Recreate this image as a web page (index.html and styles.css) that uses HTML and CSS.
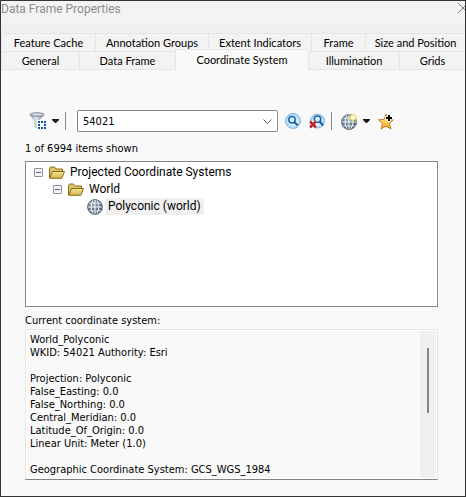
FILE: index.html
```html
<!DOCTYPE html>
<html lang="en">
<head>
<meta charset="utf-8">
<title>Data Frame Properties</title>
<link rel="stylesheet" href="styles.css">
</head>
<body>
<svg class="defs" aria-hidden="true">
  <defs>
    <linearGradient id="metal"><stop offset="0" stop-color="#8292a3"/><stop offset=".4" stop-color="#e4e9ee"/><stop offset="1" stop-color="#748496"/></linearGradient>
    <radialGradient id="glass"><stop offset="0" stop-color="#ffffff"/><stop offset=".65" stop-color="#cdeafb"/><stop offset="1" stop-color="#9fcdec"/></radialGradient>
    <radialGradient id="ball" cx=".4" cy=".35"><stop offset="0" stop-color="#9aa8b8"/><stop offset="1" stop-color="#56677c"/></radialGradient>
    <linearGradient id="gold" x2="0" y2="1"><stop offset="0" stop-color="#fff6a0"/><stop offset="1" stop-color="#f5a81c"/></linearGradient>
    <linearGradient id="folderfill" x2="0" y2="1"><stop offset="0" stop-color="#f4e393"/><stop offset="1" stop-color="#d3b64f"/></linearGradient>
    <symbol id="globe" viewBox="0 0 16 16">
      <circle cx="8" cy="8" r="7.5" fill="url(#ball)" stroke="#6f7c8b"/>
      <path d="M8 1v14M1 8h14M2.500 4.500q5.500-1.500 11 0M2.500 11.500q5.500 1.500 11 0M6 1.500q-4 6.500 0 13M10 1.500q4 6.500 0 13" fill="none" stroke="#f2f5f8"/>
    </symbol>
    <symbol id="folder" viewBox="0 0 16 13">
      <path d="M.5 12V2.500l1-1.500h4l1.500 2h6.500v2.500" fill="#dcc36a" stroke="#8a6d1c"/>
      <path d="M.8 12.300 3.500 5.500h12l-2.700 6.800z" fill="url(#folderfill)" stroke="#8a6d1c"/>
    </symbol>
    <symbol id="caret" viewBox="0 0 7 4"><path d="M0 0h7v1L4 4H3L0 1z" fill="#1c1c1c"/></symbol>
  </defs>
</svg>
<main class="window">
  <header class="titlebar">
    <h1>Data Frame Properties</h1>
    <button class="close" aria-label="Close"><svg width="10" height="10" viewBox="0 0 10 10"><path d="M0 0l10 10M10 0L0 10" stroke="#858585" fill="none"/></svg></button>
  </header>
  <nav class="tabs" role="tablist">
    <div class="tabrow tabrow-back">
      <button role="tab">Feature Cache</button>
      <button role="tab">Annotation Groups</button>
      <button role="tab">Extent Indicators</button>
      <button role="tab">Frame</button>
      <button role="tab">Size and Position</button>
    </div>
    <div class="tabrow tabrow-front">
      <button role="tab">General</button>
      <button role="tab">Data Frame</button>
      <button role="tab" class="selected" aria-selected="true">Coordinate System</button>
      <button role="tab">Illumination</button>
      <button role="tab">Grids</button>
    </div>
  </nav>
  <section class="page">
    <div class="toolbar">
      <button class="tool" aria-label="Filter">
        <svg width="18" height="18" viewBox="0 0 18 18"><path d="M1 3l5 6v6l3 1V9l6-6z" fill="url(#metal)" stroke="#8c99a6" stroke-width=".6"/><ellipse cx="8" cy="2.500" rx="7" ry="1.700" fill="#d6dde4" stroke="#768493"/><path d="M8 8h10v10H8z" fill="#f9f9f9"/><path d="M9 9h2v2H9zM12 9h2v2h-2zM15 9h2v2h-2zM9 12h2v2H9zM15 12h2v2h-2zM9 15h2v2H9zM12 15h2v2h-2zM15 15h2v2h-2z" fill="#0c59a6"/></svg>
      </button>
      <button class="drop" aria-label="Filter options"><svg width="7" height="4"><use href="#caret"/></svg></button>
      <span class="sep"></span>
      <div class="combo">
        <input type="text" value="54021" aria-label="Search coordinate systems">
        <button aria-label="Recent searches"><svg width="9" height="5" viewBox="0 0 9 5"><path d="M.5.5l4 4 4-4" fill="none" stroke="#5a5a5a"/></svg></button>
      </div>
      <button class="tool tool-search" aria-label="Search">
        <svg width="16" height="16" viewBox="0 0 16 16"><circle cx="8" cy="8" r="7.500" fill="url(#glass)" stroke="#83bce0"/><circle cx="7" cy="6.700" r="3.200" fill="#dff3ff" stroke="#1769a6" stroke-width="1.500"/><path d="M9.300 9l3.400 3.400" stroke="#145d97" stroke-width="2"/></svg>
      </button>
      <button class="tool tool-clear" aria-label="Clear search">
        <svg width="16" height="16" viewBox="0 0 16 16"><circle cx="8.500" cy="8" r="7" fill="url(#glass)" stroke="#83bce0"/><circle cx="8.500" cy="6.200" r="3.200" fill="#dff3ff" stroke="#1769a6" stroke-width="1.500"/><path d="M10.700 8.500l3.400 4" stroke="#145d97" stroke-width="2"/><path d="M1.500 9l5.500 5.500M7 9l-5.500 5.500" stroke="#fff" stroke-width="4"/><path d="M1 8.500l6 6M7 8.500l-6 6" stroke="#bd252c" stroke-width="2.500"/></svg>
      </button>
      <span class="sep"></span>
      <button class="tool" aria-label="Add coordinate system">
        <svg width="17" height="17" viewBox="0 0 17 17"><use href="#globe" y="1" width="16" height="16"/><path d="M12 0l1 2.500 2.500-1.500-1 2.700 2.500.8-2.500 1 1 2.500-2.500-1L12 9.500 11 7 8.500 8l1-2.500L7 4.500l2.500-.8-1-2.700L11 2.500z" fill="#f3df68"/><circle cx="12" cy="4.600" r="2" fill="#fffde0"/></svg>
      </button>
      <button class="drop" aria-label="Add options"><svg width="7" height="4"><use href="#caret"/></svg></button>
      <button class="tool" aria-label="Add to favorites">
        <svg width="16" height="17" viewBox="0 0 16 17"><path d="M8 1l2 5.500 5.300.3-4 3.700 1.700 5.500-5-3-5 3 1.500-5.500-4-3.700L6 6.500z" fill="url(#gold)" stroke="#c9791a"/><path d="M11 1v8M7 5h8" stroke="#fff" stroke-width="3"/><path d="M11 2v6M8 5h6" stroke="#000" stroke-width="2"/></svg>
      </button>
    </div>
    <p class="count">1 of 6994 items shown</p>
    <ul class="tree" role="tree">
      <li>
        <div class="node"><button class="toggle" aria-label="Collapse"></button><svg width="16" height="13"><use href="#folder"/></svg><span>Projected Coordinate Systems</span></div>
        <ul>
          <li>
            <div class="node"><button class="toggle" aria-label="Collapse"></button><svg width="16" height="13"><use href="#folder"/></svg><span>World</span></div>
            <ul>
              <li class="leaf"><div class="node"><svg width="16" height="16"><use href="#globe"/></svg><span class="picked">Polyconic (world)</span></div></li>
            </ul>
          </li>
        </ul>
      </li>
    </ul>
    <label class="caption" for="details">Current coordinate system:</label>
    <div class="details">
      <textarea id="details" rows="11" readonly>World_Polyconic
WKID: 54021 Authority: Esri

Projection: Polyconic
False_Easting: 0.0
False_Northing: 0.0
Central_Meridian: 0.0
Latitude_Of_Origin: 0.0
Linear Unit: Meter (1.0)

Geographic Coordinate System: GCS_WGS_1984</textarea>
      <div class="scrollbar"><span class="thumb"></span></div>
    </div>
  </section>
</main>
</body>
</html>
```
FILE: styles.css
```css
* { box-sizing: border-box; }
body {
  margin: 0;
  font: 11px/13px "DejaVu Sans Condensed", "DejaVu Sans", sans-serif;
  color: #000;
  background: #f9f9f9;
}
button {
  margin: 0;
  padding: 0;
  border: 0;
  background: none;
  font: inherit;
  color: inherit;
}
svg { display: block; flex: none; }
ul { list-style: none; margin: 0; padding: 0; }
.defs { position: absolute; width: 0; height: 0; }
.window {
  display: flex;
  flex-direction: column;
  min-height: 100vh;
  border: 1px solid #353335;
  overflow: hidden;
}
.titlebar {
  display: flex;
  justify-content: space-between;
  height: 32px;
  background: linear-gradient(#f3f3f3 70%, #f0f0f0 75%);
}
h1 {
  margin: 0;
  font: 12px/16px Roboto, sans-serif;
  color: #8c8c8c;
}
.close { align-self: flex-start; padding-top: 2px; margin-right: -3px; }
.tabs { background: #f0f0f0; }
.tabrow {
  display: grid;
  font: 11px/17px Lato, sans-serif;
}
.tabrow-back { grid-template-columns: 94fr 113fr 103fr 54fr 100fr; }
.tabrow-front { grid-template-columns: 78fr 96fr 133fr 91fr 66fr; }
.tabrow button {
  height: 18px;
  border: 1px solid #e5e5e5;
  border-width: 1px 0 0 1px;
  background: #f3f3f3;
  white-space: nowrap;
}
.tabrow-front button { height: 19px; border-bottom-width: 1px; }
.tabrow .selected {
  height: 21px;
  margin-top: -2px;
  padding-bottom: 2px;
  border-bottom: 0;
  background: #f9f9f9;
}
.page {
  flex: 1;
  display: flex;
  flex-direction: column;
  padding: 40px 27px 16px 24px;
}
.toolbar { display: flex; align-items: center; height: 22px; }
.tool { margin-left: 4px; }
.drop { margin-left: 5px; }
.sep { width: 1px; height: 18px; margin: 0 5px 0 6px; background: #8b8b8b; }
.combo {
  display: flex;
  align-items: center;
  flex: 0 1 201px;
  height: 22px;
  margin: 0 3px 0 6px;
  padding: 0 5px;
  border: 1px solid #878787;
  border-radius: 2px;
  background: #fff;
}
.combo input {
  flex: 1;
  min-width: 0;
  padding: 0;
  border: 0;
  outline: 0;
  background: none;
  font: inherit;
  color: inherit;
}
.tool-clear { margin-left: 8px; }
.drop + .tool { margin-left: 8px; }
.count { margin: 10px 0 6px; }
.tree {
  height: 146px;
  padding: 2px 8px;
  border: 1px solid #828790;
  background: #fff;
  font: 12px/17px Roboto, sans-serif;
}
.tree ul { padding-left: 19px; }
.node { display: flex; align-items: center; gap: 5px; height: 17px; }
.toggle + svg { margin-left: 1px; }
.leaf { padding-left: 15px; }
.leaf .node { gap: 2px; }
.picked { padding: 0 3px; background: #f0f0f0; }
.toggle {
  width: 9px;
  height: 9px;
  border: 1px solid #919191;
  border-radius: 1px;
  background: linear-gradient(#4b63a7, #4b63a7) center / 5px 1px no-repeat #f5f5f5;
}
.caption { margin: 7px 0 2px; }
.details {
  display: flex;
  border: 1px solid #e6e6e6;
  border-bottom-color: #828282;
  height: 151px;
  outline: 1px solid #fff;
  outline-offset: -2px;
}
.details textarea {
  flex: 1;
  min-width: 0;
  margin: 1px;
  padding: 2px 3px;
  border: 0;
  outline: 0;
  resize: none;
  overflow: hidden;
  background: #f9f9f9;
  font: inherit;
  color: inherit;
}
.scrollbar {
  display: flex;
  justify-content: center;
  width: 16px;
  margin: 1px;
  padding-top: 17px;
  background: #f0f0f0;
}
.thumb { width: 2px; height: 65px; background: #858585; }
```
